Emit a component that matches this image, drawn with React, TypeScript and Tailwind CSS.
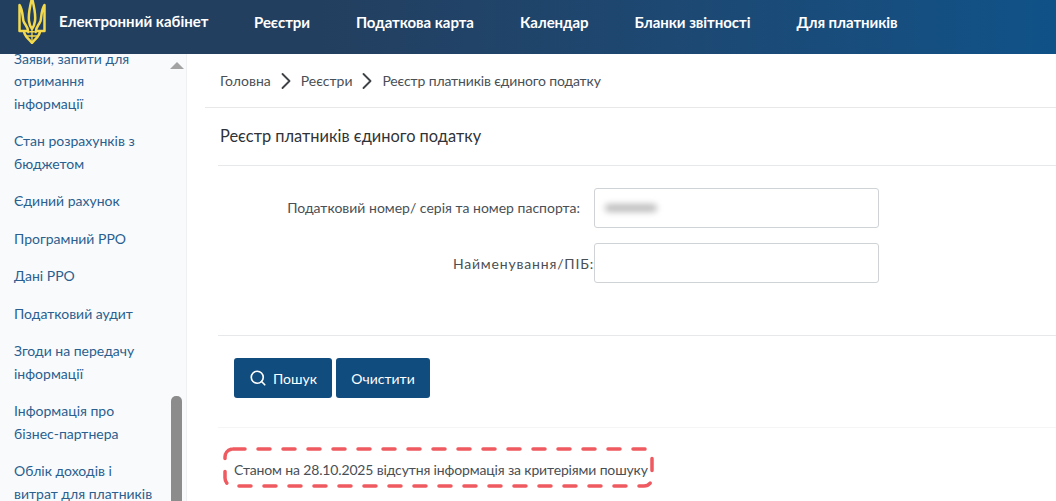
import { ChevronRight, Search } from 'lucide-react'

const navItems = ['Реєстри', 'Податкова карта', 'Календар', 'Бланки звітності', 'Для платників']

const sideItems = [
  ['Заяви, запити для', 'отримання', 'інформації'],
  ['Стан розрахунків з', 'бюджетом'],
  ['Єдиний рахунок'],
  ['Програмний РРО'],
  ['Дані РРО'],
  ['Податковий аудит'],
  ['Згоди на передачу', 'інформації'],
  ['Інформація про', 'бізнес-партнера'],
  ['Облік доходів і', 'витрат для платників'],
]

function Trident() {
  return (
    <svg width="28" height="44" viewBox="0 0 28 44" fill="none" stroke="#f2d94e" strokeWidth="2.5" strokeLinejoin="round" className="shrink-0">
      <path d="M14 -2 C12 6 10 14 11 21 C11.5 25 12.5 27 14 29 C15.5 27 16.5 25 17 21 C18 14 16 6 14 -2 Z" />
      <path d="M1.5 5 L1.5 31 L10 31 C10 27 7 25 5.5 21 C4.5 18 5 10 1.5 5 Z" />
      <path d="M26.5 5 L26.5 31 L18 31 C18 27 21 25 22.5 21 C23.5 18 23 10 26.5 5 Z" />
      <path d="M6 31 C6 36 10 38 14 43 C18 38 22 36 22 31" />
      <path d="M9.5 33 C11 31 17 31 18.5 33 M14 30 L14 41 M9 36 L19 36" strokeWidth="1.3" />
    </svg>
  )
}

export default function App() {
  return (
    <div className="h-[501px] w-[1056px] overflow-hidden bg-white font-['Lato','Noto_Sans',sans-serif] text-[14px] text-[#4a4f55]">
      <header className="flex h-[54px] items-start bg-gradient-to-r from-[#233f5f] from-30% to-[#0f5288] pl-[18px] text-white">
        <Trident />
        <span className="mt-[13px] ml-[13px] w-[150px] text-[15px] leading-[17px] font-bold whitespace-nowrap">Електронний кабінет</span>
        <nav className="mt-[13px] ml-[45px] flex gap-[46px] text-[15px] leading-[18px] font-bold tracking-[-0.05px] whitespace-nowrap">
          {navItems.map((item) => (
            <span key={item}>{item}</span>
          ))}
        </nav>
      </header>

      <div className="flex h-[447px]">
        <aside className="relative w-[187px] shrink-0 overflow-hidden border-r border-[#eef0f2] bg-[#f8fafc]">
          <ul className="mt-[-6.5px] flex flex-col gap-[15px] pl-[14px] text-[14px] leading-[22.5px] text-[#2a5f8f]">
            {sideItems.map((lines) => (
              <li key={lines[0]}>
                {lines.map((line) => (
                  <div key={line} className="whitespace-nowrap">{line}</div>
                ))}
              </li>
            ))}
          </ul>
          <div className="absolute top-[8px] left-[170px] h-0 w-0 border-x-[7px] border-b-[7px] border-x-transparent border-b-[#a3a3a3]" />
          <div className="absolute top-[342px] left-[171px] h-[120px] w-[11px] rounded-t-[5px] bg-[#8c8c8c]" />
        </aside>

        <main className="min-w-0 flex-1">
          <div className="ml-[18px] flex h-[54px] items-center border-b border-[#e6e8ea] pl-[15px] whitespace-nowrap">
            <span>Головна</span>
            <ChevronRight size={28} strokeWidth={1.6} className="mx-[1px] text-[#3f4348]" />
            <span>Реєстри</span>
            <ChevronRight size={28} strokeWidth={1.6} className="mx-[1px] text-[#3f4348]" />
            <span className="tracking-[-0.15px]">Реєстр платників єдиного податку</span>
          </div>

          <div className="ml-[31px]">
            <h1 className="flex h-[58px] items-center border-b border-[#e6e8ea] pl-[2px] text-[16.4px] font-normal text-[#2f3338]">
              Реєстр платників єдиного податку
            </h1>

            <div className="mt-[22px] flex flex-col gap-[15px] border-b border-[#e6e8ea] pb-[52px]">
              <div className="flex items-center">
                <label className="w-[376px] pr-[14px] pb-[1px] text-right whitespace-nowrap">Податковий номер/ серія та номер паспорта:</label>
                <div className="flex h-[40px] w-[285px] items-center rounded-[3px] border border-[#cfd3d6] pl-[10px]">
                  <div className="h-[8px] w-[52px] rounded-full bg-[#bdbdbd] blur-[3px]" />
                </div>
              </div>
              <div className="flex items-center">
                <label className="w-[376px] text-right tracking-[0.82px]">Найменування/ПІБ:</label>
                <div className="h-[40px] w-[285px] rounded-[3px] border border-[#cfd3d6]" />
              </div>
            </div>

            <div className="flex gap-[4px] border-b border-[#f4f5f6] pt-[22px] pb-[29px] pl-[16px] text-white">
              <button className="flex h-[40px] w-[98px] items-center justify-center gap-[6px] rounded-[3px] bg-[#114c7e]">
                <Search size={18} strokeWidth={2.2} />
                Пошук
              </button>
              <button className="h-[40px] w-[94px] rounded-[3px] bg-[#114c7e]">Очистити</button>
            </div>

            <div className="relative pt-[31px] pl-[16px]">
              <p className="tracking-[-0.15px] whitespace-nowrap">Станом на 28.10.2025 відсутня інформація за критеріями пошуку</p>
              <svg width="436" height="46" className="absolute top-[17px] left-[2px]" fill="none">
                <rect x="5" y="4" width="427" height="37" rx="8" stroke="#ee5a5f" strokeWidth="3.5" strokeLinecap="round" strokeDasharray="12 13" />
              </svg>
            </div>
          </div>
        </main>
      </div>
    </div>
  )
}
